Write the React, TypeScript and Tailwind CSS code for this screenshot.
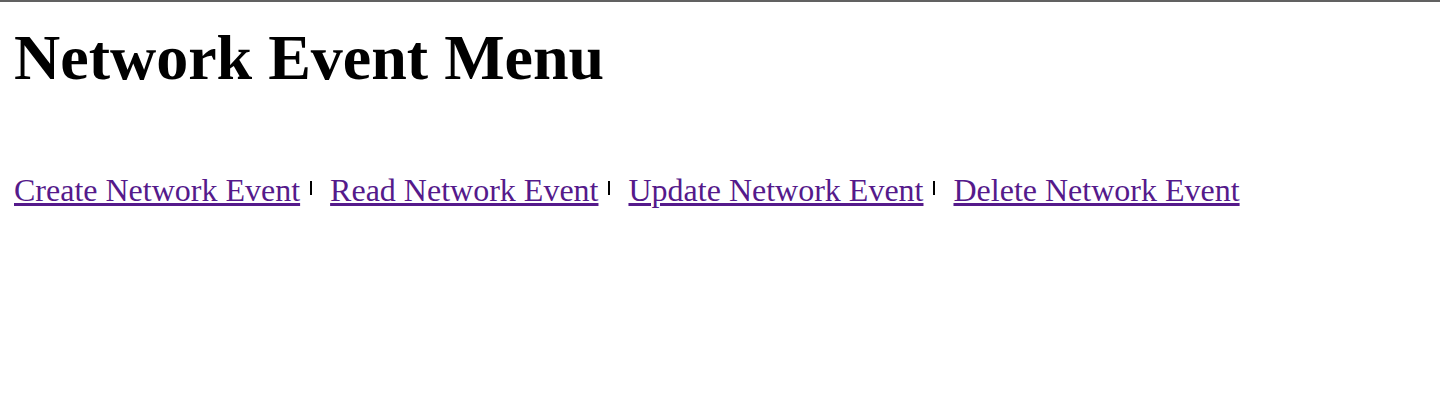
import React from 'react';

const links = ['Create Network Event', 'Read Network Event', 'Update Network Event', 'Delete Network Event'];

export default function App() {
  return (
    <div className="min-h-[418px] bg-white border-t-2 border-[#616161] px-[14px] font-['Liberation_Serif',serif]">
      <h1 className="mt-[19px] text-[64px] font-bold leading-[74px] text-black">Network Event Menu</h1>
      <nav className="mt-[77px] text-[32px] leading-[37px] text-[#551a8b]">
        {links.map((label, i) => (
          <React.Fragment key={label}>
            <a href="#" className="underline text-[#551a8b]">{label}</a>
            {i < links.length - 1 && (
              <span className="inline-block w-[2px] h-[14px] ml-[10px] mr-[18px] mb-[6px] bg-black" />
            )}
          </React.Fragment>
        ))}
      </nav>
    </div>
  );
}
